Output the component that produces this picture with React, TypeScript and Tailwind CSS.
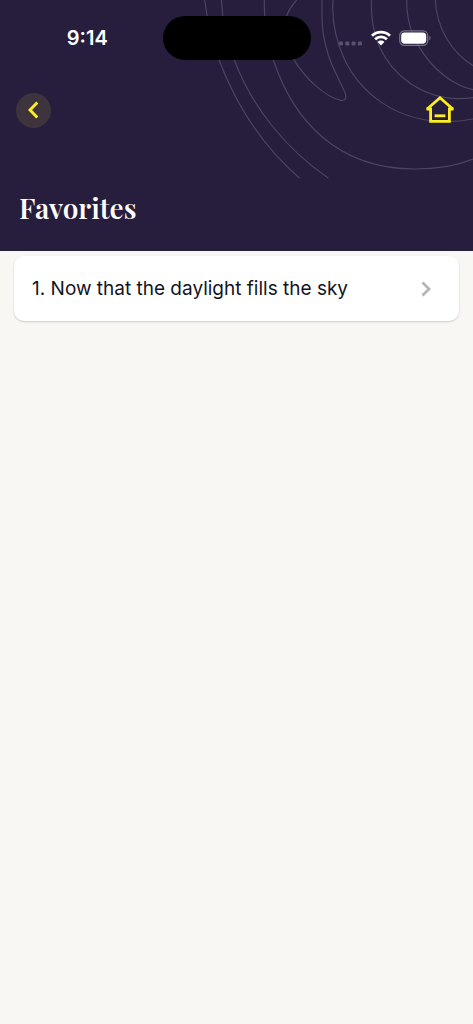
interface Hymn {
  number: number;
  title: string;
}

const favorites: Hymn[] = [{ number: 1, title: "Now that the daylight fills the sky" }];

const contours = [
  "M44 0C50 50 62 110 87 180C140 320 220 440 328 534",
  "M94 0C98 70 110 120 133 180C185 320 290 450 415 534",
  "M223 0C221 70 230 120 250 180C310 360 440 507 675 507C740 507 800 497 849 477",
  "M320 0C305 16 296 30 290 48C275 90 285 140 311 178C345 235 405 290 452 301C466 304 471 293 465 278C445 230 396 160 396 48V0",
  "M429 0C425 60 435 115 462 175C510 280 620 365 770 365C800 365 825 362 849 357",
  "M544 0C544 60 550 95 568 140C610 230 700 295 805 296C820 296 835 295 849 293",
  "M650 0C650 60 662 100 687 140C725 205 785 255 849 269",
  "M736 0C740 80 780 155 849 197",
];

function ContourArt() {
  return (
    <svg
      className="pointer-events-none absolute right-0 top-0 h-[190px] w-[283px]"
      viewBox="0 0 849 570"
      fill="none"
      stroke="#4d445f"
      strokeWidth="3.5"
      aria-hidden="true"
    >
      {contours.map((d) => (
        <path key={d} d={d} />
      ))}
    </svg>
  );
}

function StatusBar() {
  return (
    <div className="relative grid h-[76px] grid-cols-[1fr_148px_1fr] items-center">
      <div className="pl-3 text-center font-['Inter',sans-serif] text-xl font-semibold text-white">
        9:14
      </div>
      <div className="h-11 rounded-full bg-black" />
      <div className="flex items-center justify-center gap-2 pr-[14px]">
        <svg width="24" height="16" viewBox="0 0 24 16" fill="#5a516b" aria-hidden="true">
          <rect x="0" y="11.5" width="4" height="4" rx="1.2" />
          <rect x="6.3" y="11.5" width="4" height="4" rx="1.2" />
          <rect x="12.6" y="11.5" width="4" height="4" rx="1.2" />
          <rect x="18.9" y="11.5" width="4" height="4" rx="1.2" />
        </svg>
        <svg width="20" height="16" viewBox="0 0 20 16" fill="none" stroke="#fff" strokeWidth="2.8" aria-hidden="true">
          <path d="M1 5.8C6 1 14 1 19 5.8" />
          <path d="M4.1 9.2C7.4 6.1 12.6 6.1 15.9 9.2" />
          <path d="M6.6 11.9C8.5 10.1 11.5 10.1 13.4 11.9L10 15.4Z" fill="#fff" stroke="none" />
        </svg>
        <svg width="32" height="16" viewBox="0 0 32 16" fill="none" aria-hidden="true">
          <rect x=".7" y=".9" width="28" height="14.4" rx="4.6" stroke="#777087" strokeWidth="1.2" />
          <rect x="2.2" y="2.5" width="25" height="11.2" rx="3.4" fill="#fff" />
          <path d="M30.3 5.8C32 6.6 32 9.6 30.3 10.4Z" fill="#777087" />
        </svg>
      </div>
    </div>
  );
}

function Header() {
  return (
    <header className="relative h-[251px] overflow-hidden bg-[#271e3d]">
      <ContourArt />
      <StatusBar />
      <nav className="relative flex items-center justify-between px-4 pt-4">
        <button
          type="button"
          aria-label="Back"
          className="flex size-[35px] items-center justify-center rounded-full bg-[#3e343e]"
        >
          <svg width="12" height="18" viewBox="0 0 12 18" fill="none" stroke="#fdee21" strokeWidth="3">
            <path d="M9.3 1.5L2 9L9.3 16.5" />
          </svg>
        </button>
        <button type="button" aria-label="Home" className="flex h-9 w-[34px] items-center justify-center">
          <svg width="28" height="28" viewBox="0 0 28 28" fill="none" stroke="#fdee21" strokeWidth="2.8">
            <path d="M.4 13H4.6V25.4H23.4V13H27.6" />
            <path d="M1.2 13L14 1.8L26.8 13" />
            <path d="M8.6 19.8H19.4" />
          </svg>
        </button>
      </nav>
      <h1 className="relative mt-15 px-[19px] font-['Playfair_Display','Liberation_Serif',serif] text-[28px] leading-10 font-semibold text-white">
        Favorites
      </h1>
    </header>
  );
}

export default function App() {
  return (
    <div className="min-h-screen bg-[#f8f7f3]">
      <Header />
      <main className="px-[14px] pt-[5px]">
        <ul className="space-y-2">
          {favorites.map((hymn) => (
            <li key={hymn.number}>
              <a
                href="#"
                className="flex h-[65px] items-center justify-between rounded-[10px] bg-white pr-7 pl-[18px] font-['Inter',sans-serif] text-[19px] leading-[31px] text-[#14141f] shadow-[0_1px_2px_rgba(0,0,0,0.18)]"
              >
                <span>
                  {hymn.number}. {hymn.title}
                </span>
                <svg width="10" height="16" viewBox="0 0 10 16" fill="none" stroke="#b5b5b8" strokeWidth="2.8" aria-hidden="true">
                  <path d="M1.5 1.5L8 8L1.5 14.5" />
                </svg>
              </a>
            </li>
          ))}
        </ul>
      </main>
    </div>
  );
}
